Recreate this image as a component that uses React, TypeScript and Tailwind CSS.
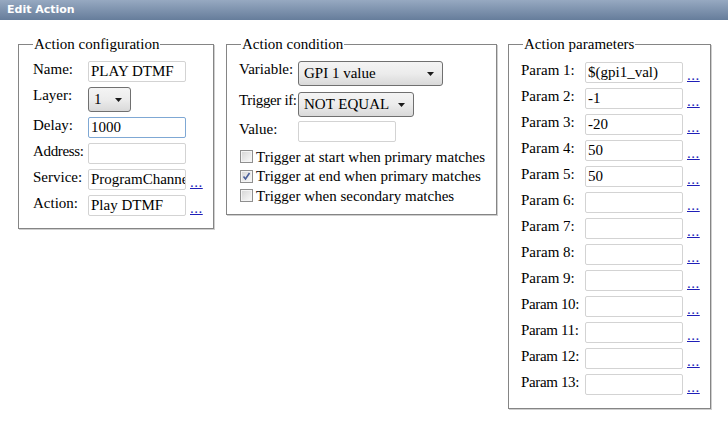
import React from "react";

function TextBox({ value = "", focused = false, width = "w-[98px]" }: { value?: string; focused?: boolean; width?: string }) {
  return (
    <div
      className={`${width} h-[21px] shrink-0 overflow-hidden whitespace-nowrap rounded-[2px] border pl-[2px] text-[15px] leading-[19px] text-black ${
        focused ? "border-[#7fa8d4]" : "border-[#d3d3d3]"
      }`}
    >
      {value}
    </div>
  );
}

function Select({ value, width }: { value: string; width: string }) {
  return (
    <div
      className={`${width} flex h-[25px] shrink-0 items-center justify-between rounded-[3px] border border-[#707070] bg-gradient-to-b from-[#f4f4f4] via-[#ececec] to-[#d9d9d9] pl-[5px] pr-[8px] text-[15px] leading-[19px] text-black`}
    >
      <span className="whitespace-nowrap">{value}</span>
      <svg width="7" height="4" viewBox="0 0 7 4" className="shrink-0">
        <path d="M0 0h7L3.5 4z" fill="#1b1b1b" />
      </svg>
    </div>
  );
}

function Dots() {
  return (
    <a href="#" className="ml-[4px] self-end text-[15px] leading-[15px] tracking-[0.5px] text-[#1f1fb8] underline">
      ...
    </a>
  );
}

function Check({ checked = false }: { checked?: boolean }) {
  return (
    <span className="flex h-[13px] w-[13px] shrink-0 items-center justify-center border border-[#8f8f8f] bg-white">
      <span className="flex h-[11px] w-[11px] items-center justify-center border border-[#f4f4f4] bg-gradient-to-br from-[#d8d8d8] to-[#f8f8f8]">
        {checked && (
          <svg width="9" height="9" viewBox="0 0 9 9">
            <path d="M1.5 4.5l2 2.5 4-6" stroke="#4a5f9a" strokeWidth="1.6" fill="none" />
          </svg>
        )}
      </span>
    </span>
  );
}

function Row({ label, labelW, tight = false, children }: { label: string; labelW: string; tight?: boolean; children: React.ReactNode }) {
  return (
    <div className="flex items-start">
      <div className={`${labelW} shrink-0 whitespace-nowrap leading-[16px] ${tight ? "tracking-[-0.35px]" : ""}`}>{label}</div>
      {children}
    </div>
  );
}

const groupCls = "border border-[#858585] shadow-[1px_1px_0_#cfcfcf]";
const legendCls = "ml-[14px] px-[1px] text-[15px] leading-[17px]";

export default function App() {
  const params = ["$(gpi1_val)", "-1", "-20", "50", "50", "", "", "", "", "", "", "", ""];

  return (
    <div className="h-[424px] w-[728px] overflow-hidden bg-white font-['Liberation_Serif','Times_New_Roman',serif] text-[15px] text-black">
      <div className="flex h-[20px] items-center bg-gradient-to-b from-[#97a9c1] to-[#667d9b] pl-[7px] font-['DejaVu_Sans',Verdana,sans-serif] text-[11px] font-bold text-white">
        Edit Action
      </div>

      <div className="flex items-start pl-[18px] pt-[16px]">
        {/* Action configuration */}
        <fieldset className={`w-[196px] ${groupCls}`}>
          <legend className={legendCls}>Action configuration</legend>
          <div className="flex flex-col gap-[5px] pb-[12px] pl-[14px] pt-[8px]">
            <Row label="Name:" labelW="w-[55px]">
              <TextBox value="PLAY DTMF" />
            </Row>
            <Row label="Layer:" labelW="w-[55px]">
              <Select value="1" width="w-[43px]" />
            </Row>
            <Row label="Delay:" labelW="w-[55px]">
              <TextBox value="1000" focused />
            </Row>
            <Row label="Address:" labelW="w-[55px]" tight>
              <TextBox />
            </Row>
            <Row label="Service:" labelW="w-[55px]">
              <TextBox value="ProgramChannel" />
              <Dots />
            </Row>
            <Row label="Action:" labelW="w-[55px]">
              <TextBox value="Play DTMF" />
              <Dots />
            </Row>
          </div>
        </fieldset>

        {/* Action condition */}
        <fieldset className={`ml-[12px] w-[271px] ${groupCls}`}>
          <legend className={legendCls}>Action condition</legend>
          <div className="flex flex-col pb-[8px] pl-[12px] pt-[8px]">
            <Row label="Variable:" labelW="w-[59px]">
              <Select value="GPI 1 value" width="w-[145px]" />
            </Row>
            <div className="mt-[6px]">
              <Row label="Trigger if:" labelW="w-[59px]" tight>
                <Select value="NOT EQUAL" width="w-[116px]" />
              </Row>
            </div>
            <div className="mt-[4px]">
              <Row label="Value:" labelW="w-[59px]">
                <TextBox />
              </Row>
            </div>
            <div className="mt-[5px] flex flex-col">
              {[
                ["Trigger at start when primary matches", false],
                ["Trigger at end when primary matches", true],
                ["Trigger when secondary matches", false],
              ].map(([t, c]) => (
                <div key={t as string} className="flex h-[19.5px] items-center gap-[3px] pl-px">
                  <Check checked={c as boolean} />
                  <span className="whitespace-nowrap">{t as string}</span>
                </div>
              ))}
            </div>
          </div>
        </fieldset>

        {/* Action parameters */}
        <fieldset className={`ml-[11px] w-[203px] ${groupCls}`}>
          <legend className={legendCls}>Action parameters</legend>
          <div className="flex flex-col gap-[5px] pb-[13px] pl-[12px] pt-[9px]">
            {params.map((p, i) => (
              <Row key={i} label={`Param ${i + 1}:`} labelW="w-[64px]" tight={i >= 9}>
                <TextBox value={p} />
                <Dots />
              </Row>
            ))}
          </div>
        </fieldset>
      </div>
    </div>
  );
}
